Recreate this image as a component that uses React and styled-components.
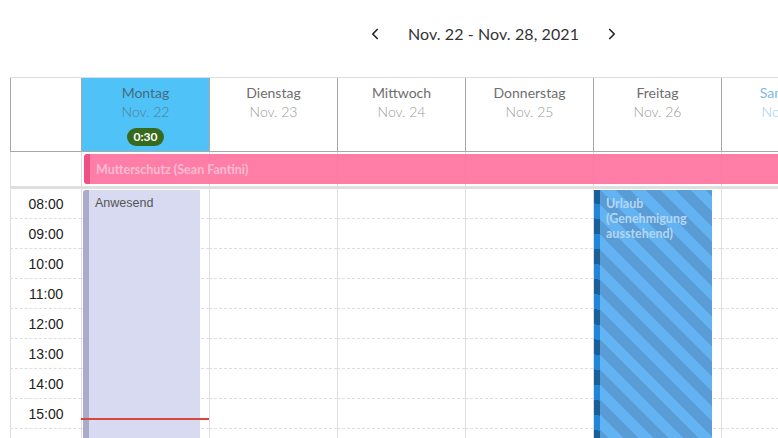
import React from "react";
import styled, { createGlobalStyle } from "styled-components";
import { ChevronLeft, ChevronRight } from "lucide-react";

const GlobalStyle = createGlobalStyle`
  html, body {
    margin: 0;
    padding: 0;
    background: #fff;
    overflow: hidden;
  }
  body {
    font-family: Lato, "Open Sans", sans-serif;
  }
`;

const TIME_COL = 71;
const DAY_COL = 128;

const days = [
  { name: "Montag", date: "Nov. 22", today: true, badge: "0:30" },
  { name: "Dienstag", date: "Nov. 23" },
  { name: "Mittwoch", date: "Nov. 24" },
  { name: "Donnerstag", date: "Nov. 25" },
  { name: "Freitag", date: "Nov. 26" },
  { name: "Samstag", date: "Nov. 27", weekend: true },
  { name: "Sonntag", date: "Nov. 28", weekend: true },
];

const hours = ["08:00", "09:00", "10:00", "11:00", "12:00", "13:00", "14:00", "15:00", "16:00"];

const Page = styled.div`
  width: ${TIME_COL + DAY_COL * 7 + 20}px;
  padding: 0 10px;
  box-sizing: border-box;
`;

const Toolbar = styled.div`
  height: 77px;
  display: flex;
  align-items: center;
  justify-content: center;
  gap: 14px;
  padding-bottom: 10px;
  box-sizing: border-box;
  color: #222;
`;

const NavButton = styled.button`
  border: 0;
  background: none;
  padding: 0;
  width: 18px;
  height: 18px;
  display: flex;
  align-items: center;
  justify-content: center;
  color: #222;
  cursor: pointer;
`;

const RangeLabel = styled.span`
  font-size: 16px;
  color: #333;
  padding: 0 10px;
  letter-spacing: 0.1px;
`;

const Grid = styled.div`
  display: grid;
  grid-template-columns: ${TIME_COL}px repeat(7, ${DAY_COL}px);
`;

const HeaderRow = styled(Grid)`
  border-top: 1px solid #dedede;
`;

const HeaderCell = styled.div`
  height: 74px;
  box-sizing: border-box;
  border-left: 1px solid #a8a8a8;
  border-bottom: 1px solid #a8a8a8;
  background: ${(p) => (p.$today ? "#4fc3f7" : "#fff")};
  display: flex;
  flex-direction: column;
  align-items: center;
  padding-top: 5px;
`;

const DayName = styled.div`
  font-size: 14px;
  line-height: 19px;
  font-weight: 400;
  color: ${(p) => (p.$today ? "#466a82" : p.$weekend ? "#7cb9e4" : "#6e6e6e")};
`;

const DayDate = styled.div`
  font-size: 14px;
  line-height: 19px;
  font-weight: 300;
  color: ${(p) => (p.$today ? "#557a92" : p.$weekend ? "#9ccbeb" : "#999")};
`;

const Badge = styled.span`
  margin-top: 7px;
  height: 18px;
  padding: 0 7px;
  border-radius: 9px;
  background: #376a1d;
  color: #fff;
  font-size: 12px;
  font-weight: 700;
  line-height: 18px;
`;

const AllDayRow = styled(Grid)`
  grid-template-rows: 34px;
  border-bottom: 3px solid #dfdfdf;
`;

const BodyCell = styled.div`
  grid-row: 1;
  grid-column: ${(p) => p.$col};
  border-left: 1px solid #dedede;
`;

const AllDayEvent = styled.div`
  grid-row: 1;
  grid-column: 2 / -1;
  margin: 2px 0 2px 3px;
  z-index: 1;
  background: rgba(255, 112, 158, 0.9);
  border-left: 6px solid #ef4f85;
  border-radius: 3px 0 0 3px;
  display: flex;
  align-items: center;
  padding-left: 6px;
  font-size: 12.5px;
  font-weight: 700;
  color: #f9bcd3;
`;

const TimeGrid = styled(Grid)`
  grid-template-rows: repeat(${hours.length}, 30px);
`;

const Slot = styled.div`
  grid-row: ${(p) => p.$row};
  grid-column: ${(p) => p.$col};
  box-sizing: border-box;
  border-left: 1px solid #dedede;
  border-bottom: 1px dashed #dedede;
  display: flex;
  align-items: center;
  justify-content: center;
  font-family: "Liberation Sans", Arial, sans-serif;
  font-size: 14px;
  color: #222;
`;

const Event = styled.div`
  grid-row: 1 / -1;
  grid-column: ${(p) => p.$col};
  margin: 1px 9px 0 ${(p) => p.$left}px;
  z-index: 1;
  box-sizing: border-box;
  border-radius: 3px 0 0 0;
  padding: 6px 6px 0 6px;
  font-size: 12px;
  line-height: 15px;
  overflow: hidden;
`;

const PresenceEvent = styled(Event)`
  background: #d8daf1;
  border-left: 6px solid #a9abc8;
  color: #555;
  font-family: "Liberation Sans", Arial, sans-serif;
  font-size: 12.5px;
`;

const VacationEvent = styled(Event)`
  font-weight: 700;
  font-size: 12.5px;
  color: #b4d6f3;
  background: repeating-linear-gradient(
    45deg,
    #63b3f3 0px,
    #63b3f3 10.6px,
    #5a9cd5 10.6px,
    #5a9cd5 21.2px
  );
  border-left: 6px solid transparent;
  border-image: repeating-linear-gradient(
      45deg,
      #2186d8 0px,
      #2186d8 10.6px,
      #1b5f98 10.6px,
      #1b5f98 21.2px
    )
    1;
  padding-right: 4px;
`;

const NowLine = styled.div`
  grid-row: 8;
  grid-column: 2;
  align-self: start;
  margin-top: 19px;
  height: 2px;
  background: #d9453f;
  z-index: 2;
`;

export default function App() {
  return (
    <Page>
      <GlobalStyle />
      <Toolbar>
        <NavButton aria-label="Vorherige Woche">
          <ChevronLeft size={18} strokeWidth={2.2} />
        </NavButton>
        <RangeLabel>Nov. 22 - Nov. 28, 2021</RangeLabel>
        <NavButton aria-label="Nächste Woche">
          <ChevronRight size={18} strokeWidth={2.2} />
        </NavButton>
      </Toolbar>

      <HeaderRow>
        <HeaderCell />
        {days.map((d) => (
          <HeaderCell key={d.name} $today={d.today}>
            <DayName $today={d.today} $weekend={d.weekend}>
              {d.name}
            </DayName>
            <DayDate $today={d.today} $weekend={d.weekend}>
              {d.date}
            </DayDate>
            {d.badge && <Badge>{d.badge}</Badge>}
          </HeaderCell>
        ))}
      </HeaderRow>

      <AllDayRow>
        {Array.from({ length: 8 }).map((_, i) => (
          <BodyCell key={i} $col={i + 1} />
        ))}
        <AllDayEvent>Mutterschutz (Sean Fantini)</AllDayEvent>
      </AllDayRow>

      <TimeGrid>
        {hours.map((h, r) =>
          Array.from({ length: 8 }).map((_, c) => (
            <Slot key={`${h}-${c}`} $row={r + 1} $col={c + 1}>
              {c === 0 ? h : null}
            </Slot>
          ))
        )}
        <PresenceEvent $col={2} $left={2}>
          Anwesend
        </PresenceEvent>
        <VacationEvent $col={6} $left={1}>
          Urlaub (Genehmigung ausstehend)
        </VacationEvent>
        <NowLine />
      </TimeGrid>
    </Page>
  );
}
